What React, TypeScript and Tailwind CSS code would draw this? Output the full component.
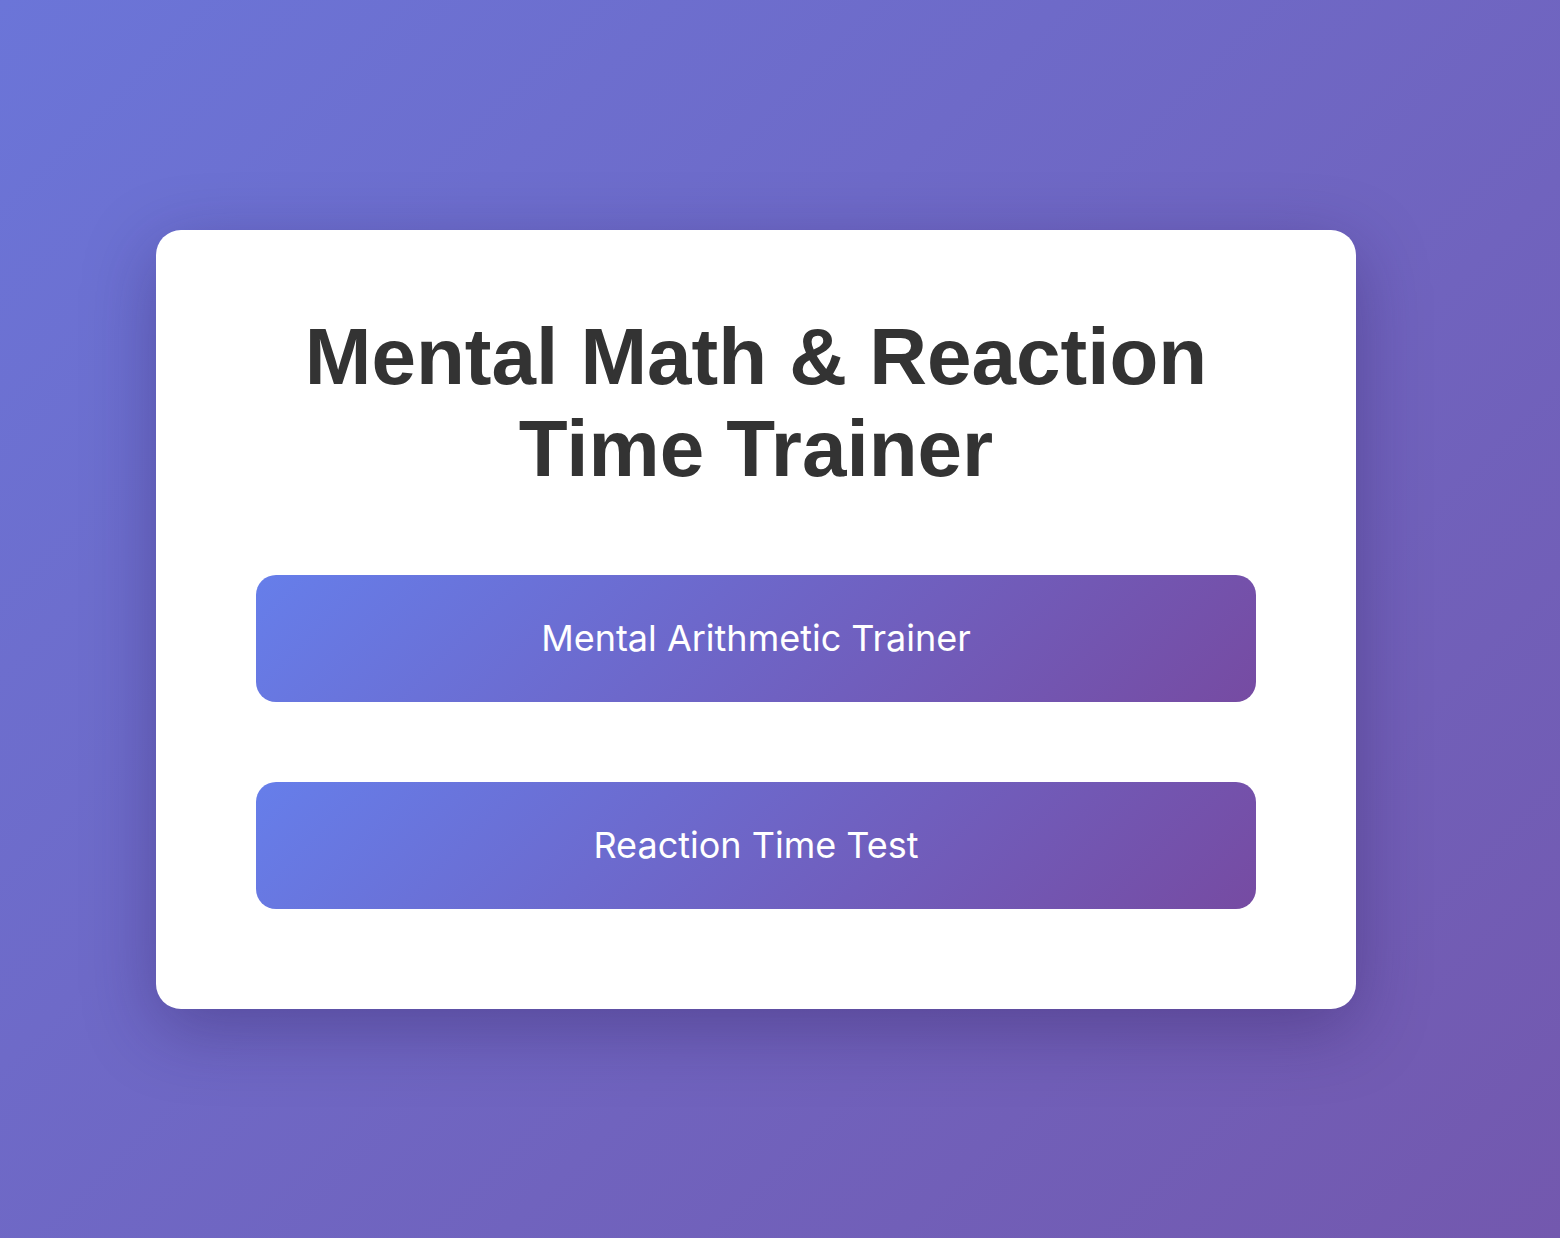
import * as React from 'react';

export default function App() {
  const modes = ['Mental Arithmetic Trainer', 'Reaction Time Test'];

  return (
    <div className="min-h-screen w-full flex items-center justify-center pr-12 bg-linear-135/srgb from-[#6b75d8] to-[#7358ae]">
      {/* Menu card */}
      <div className="w-[1200px] bg-white rounded-[25px] px-[100px] pt-[81px] pb-[100px] shadow-[0_20px_70px_rgba(40,20,80,0.35)]">
        <h1 className="text-center text-[80px] leading-[92px] font-bold text-[#333333] font-['Liberation_Sans',Arial,sans-serif]">
          Mental Math &amp; Reaction
          <br />
          Time Trainer
        </h1>

        <div className="mt-[80px] flex flex-col gap-[80px]">
          {modes.map((label) => (
            <button
              key={label}
              className="h-[127px] w-full rounded-[20px] bg-linear-135/srgb from-[#667eea] to-[#764ba2] text-white text-[36px] font-['Inter','Noto_Sans',sans-serif] flex items-center justify-center"
            >
              {label}
            </button>
          ))}
        </div>
      </div>
    </div>
  );
}
